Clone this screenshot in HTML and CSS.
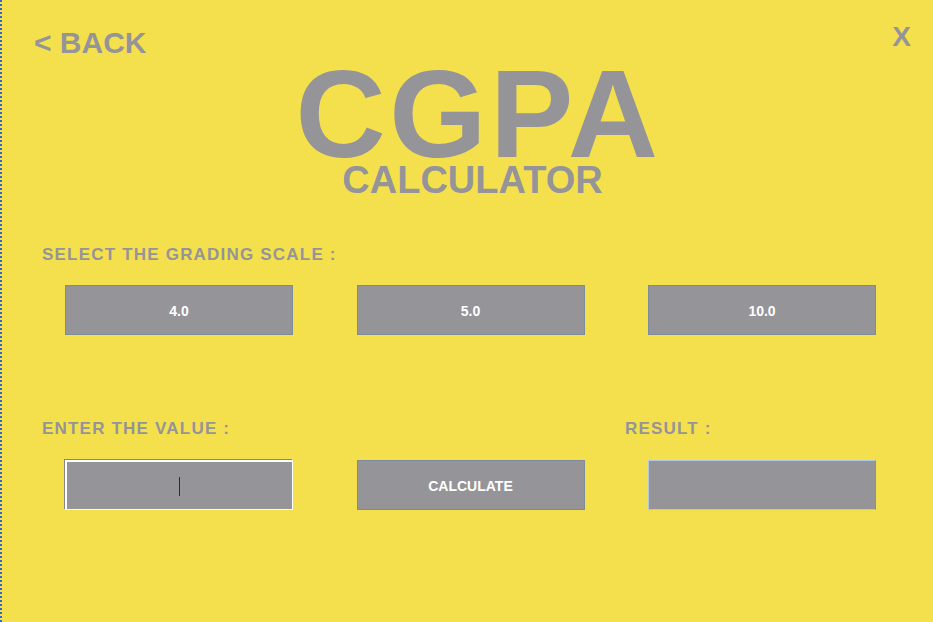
FILE: index.html
```html
<!DOCTYPE html>
<html>
<head>
<meta charset="utf-8">
<title>CGPA Calculator</title>
<link rel="stylesheet" href="styles.css">
</head>
<body>
<div class="app">
  <header class="topbar">
    <span class="back">&lt; BACK</span>
    <span class="close">X</span>
  </header>
  <div class="title">
    <div class="title-main">CGPA</div>
    <div class="title-sub">CALCULATOR</div>
  </div>
  <section class="scale">
    <div class="label label-scale">SELECT THE GRADING SCALE :</div>
    <div class="row row-scale">
      <div class="btn">4.0</div>
      <div class="btn">5.0</div>
      <div class="btn">10.0</div>
    </div>
  </section>
  <section class="calc">
    <div class="labels">
      <div class="label">ENTER THE VALUE :</div>
      <div></div>
      <div class="label">RESULT :</div>
    </div>
    <div class="row row-calc">
      <div class="field field-input"><span class="caret"></span></div>
      <div class="btn">CALCULATE</div>
      <div class="field field-result"></div>
    </div>
  </section>
</div>
</body>
</html>
```

FILE: styles.css
```css
html, body {
  margin: 0;
  padding: 0;
  background: #ffffff;
}
.app {
  box-sizing: border-box;
  width: 933px;
  height: 622px;
  border-left: 2px dotted #2f66d4;
  background: #f4e04c;
  font-family: "Liberation Sans", Arial, sans-serif;
  font-weight: bold;
  color: #959499;
  overflow: hidden;
}
.topbar {
  display: flex;
  justify-content: space-between;
  align-items: flex-start;
  padding: 26px 22px 0 32px;
  height: 34px;
}
.back {
  font-size: 30px;
  line-height: 34px;
}
.close {
  font-size: 28px;
  line-height: 32px;
  margin-top: -5px;
}
.title {
  text-align: center;
}
.title-main {
  font-size: 125px;
  line-height: 100px;
  letter-spacing: 3.5px;
  margin-top: 4px;
  padding-left: 22px;
}
.title-sub {
  font-size: 38px;
  line-height: 32px;
  padding-left: 10px;
}
.scale, .calc {
  padding-left: 63px;
}
.label {
  font-size: 17px;
  line-height: 20px;
  letter-spacing: 1.2px;
  margin-left: -23px;
  white-space: nowrap;
}
.label-scale {
  margin-top: 49px;
}
.row {
  display: grid;
  grid-template-columns: 228px 228px 228px;
  column-gap: 63.5px;
  height: 50px;
}
.row-scale {
  margin-top: 20px;
}
.labels {
  display: grid;
  grid-template-columns: 228px 228px 228px;
  column-gap: 63.5px;
  margin-top: 84px;
}
.row-calc {
  margin-top: 21px;
}
.btn {
  box-sizing: border-box;
  height: 50px;
  background: #959498;
  border: 1px solid #7d8c9b;
  color: #ffffff;
  font-size: 14px;
  display: flex;
  align-items: center;
  justify-content: center;
  padding-top: 2px;
}
.field {
  box-sizing: border-box;
  height: 50px;
  background: #959498;
}
.field-input {
  border: 1px solid #ffffff;
  border-top-width: 2px;
  border-left-width: 2px;
  box-shadow: -1px -1px 0 0 #85858a;
  display: flex;
  align-items: center;
  justify-content: center;
  padding-top: 1px;
}
.caret {
  display: block;
  width: 1px;
  height: 19px;
  background: #2c2c2e;
}
.field-result {
  border: 1px solid #b3c9df;
  border-right-color: #8e9096;
}
```
